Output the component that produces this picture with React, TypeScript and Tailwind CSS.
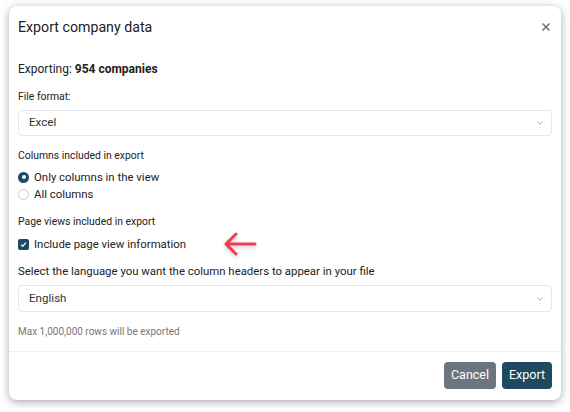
import { ChevronDown, X } from 'lucide-react'

function Select({ value, tall }: { value: string; tall?: boolean }) {
  return (
    <div
      className={`flex items-center justify-between rounded border border-[#e3e6ea] pl-[10px] pr-[6px] text-[11.6px] text-[#333] ${
        tall ? 'h-[27px]' : 'h-[26px]'
      }`}
    >
      <span>{value}</span>
      <ChevronDown size={10} strokeWidth={1.5} className="text-[#777]" />
    </div>
  )
}

export default function App() {
  return (
    <div className="h-[412px] w-[570px] bg-white pt-[6px] pl-[9px]" style={{ fontFamily: 'Roboto, "Liberation Sans", Arial, sans-serif' }}>
      <div className="flex h-[394px] w-[552px] flex-col rounded-lg bg-white shadow-[0_2px_8px_rgba(0,0,0,0.35)]">
        <div className="mt-[11px] flex h-[20px] items-center justify-between px-[9px]">
          <h1 className="text-[14.2px] leading-[20px] text-[#222]">Export company data</h1>
          <X size={12} strokeWidth={3.4} className="text-[#777]" />
        </div>

        <div className="flex-1 px-[9px] pb-[12px] text-[#222]">
          <p className="mt-[24px] text-[12px] leading-[16px]">
            Exporting: <span className="font-bold">954 companies</span>
          </p>

          <p className="mt-[12px] text-[10.4px] leading-[16px]">File format:</p>
          <div className="mt-[5px]">
            <Select value="Excel" />
          </div>

          <p className="mt-[12px] text-[10.4px] leading-[16px]">Columns included in export</p>
          <div className="mt-[5px] flex flex-col gap-[1px] text-[11.4px] leading-[16px]">
            <label className="flex items-center gap-[5px]">
              <span className="flex h-[11px] w-[11px] items-center justify-center rounded-full bg-[#1d4961]">
                <span className="h-[4px] w-[4px] rounded-full bg-white" />
              </span>
              Only columns in the view
            </label>
            <label className="flex items-center gap-[5px]">
              <span className="h-[11px] w-[11px] rounded-full border border-[#ccc]" />
              All columns
            </label>
          </div>

          <p className="mt-[12px] text-[10.4px] leading-[16px]">Page views included in export</p>
          <div className="mt-[6px] flex h-[16px] items-center">
            <label className="flex items-center gap-[5px] text-[11.4px] leading-[16px]">
              <span className="flex h-[11px] w-[11px] items-center justify-center rounded-[2px] bg-[#1d4961]">
                <svg width="7" height="7" viewBox="0 0 8 8">
                  <path d="M1.2 4.2 L3.1 6 L6.8 1.8" stroke="white" strokeWidth="1.4" fill="none" />
                </svg>
              </span>
              Include page view information
            </label>
            <svg
              className="ml-auto mr-[294px] shrink-0"
              width="36"
              height="26"
              viewBox="0 0 36 26"
              style={{ filter: 'drop-shadow(0 2px 2px rgba(0,0,0,0.2))' }}
            >
              <path d="M33 13 H4 M14 3 L4 13 L14 23" stroke="#f23a52" strokeWidth="3" strokeLinecap="round" strokeLinejoin="round" fill="none" />
            </svg>
          </div>

          <p className="mt-[11px] text-[11.4px] leading-[16px]">Select the language you want the column headers to appear in your file</p>
          <div className="mt-[6px]">
            <Select value="English" tall />
          </div>

          <p className="mt-[13px] text-[10px] leading-[14px] text-[#777]">Max 1,000,000 rows will be exported</p>
        </div>

        <div className="flex justify-end gap-[6px] border-t border-[#f0f0f0] px-[9px] pt-[10px] pb-[11px]">
          <button className="h-[27px] w-[52px] rounded bg-[#6c757d] text-[12.5px] text-white">Cancel</button>
          <button className="h-[27px] w-[50px] rounded bg-[#1d4961] text-[12.5px] text-white">Export</button>
        </div>
      </div>
    </div>
  )
}
